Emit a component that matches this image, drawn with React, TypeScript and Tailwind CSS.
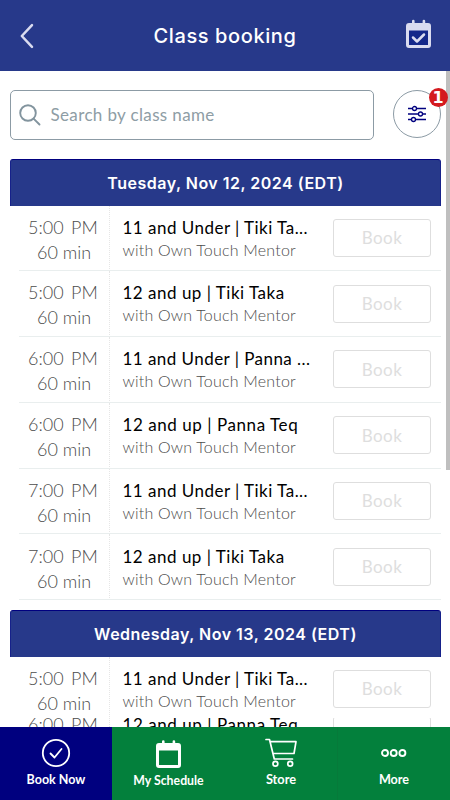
import React from "react";

const lato = "font-['Lato','Noto_Sans',sans-serif]";
const head = "font-['Inter','Liberation_Sans',sans-serif]";

type Slot = { time: string; title: string; tracking: string };

const tuesday: Slot[] = [
  { time: "5:00", title: "11 and Under | Tiki Ta...", tracking: "tracking-[0.48px]" },
  { time: "5:00", title: "12 and up | Tiki Taka", tracking: "tracking-[0.5px]" },
  { time: "6:00", title: "11 and Under | Panna ...", tracking: "tracking-[0.45px]" },
  { time: "6:00", title: "12 and up | Panna Teq", tracking: "tracking-[0.56px]" },
  { time: "7:00", title: "11 and Under | Tiki Ta...", tracking: "tracking-[0.48px]" },
  { time: "7:00", title: "12 and up | Tiki Taka", tracking: "tracking-[0.5px]" },
];

function DayHeader({ children }: { children: React.ReactNode }) {
  return (
    <div className={`${head} flex h-[46.5px] shrink-0 items-center justify-center rounded-t-[3px] border border-b-0 border-x-[#16218a] border-t-[#00007f] bg-[#27398a] text-base font-semibold tracking-[0.5px] text-white`}>
      {children}
    </div>
  );
}

function SlotRow({ slot, divider = true }: { slot: Slot; divider?: boolean }) {
  return (
    <div className="relative flex h-[65.8px] shrink-0 whitespace-nowrap">
      <div className="w-[100px] border-r border-dotted border-[#e6e6e6] text-[18px] font-light text-[#4c4c4c]">
        <div className="mt-[9.2px] flex h-[25px] items-center pl-[18px]">
          <span className="w-[43px]">{slot.time}</span>
          <span>PM</span>
        </div>
        <div className="flex h-[25px] items-center pl-[27px]">60 min</div>
      </div>
      <div className="w-[223px] pl-[12.5px]">
        <div className={`mt-[9.2px] h-[25px] text-[17px] leading-[25px] text-black ${slot.tracking}`}>{slot.title}</div>
        <div className="h-5 text-base leading-5 font-light tracking-[0.21px] text-[#4c4c4c]">with Own Touch Mentor</div>
      </div>
      <div className="mt-[13.4px] flex h-[38px] w-[98px] items-center justify-center rounded-[3px] border border-[#dedede] text-[17px] tracking-[0.4px] text-[#dedede]">Book</div>
      {divider && <div className="absolute right-0 bottom-0 left-[9px] h-px bg-[#e9eeee]" />}
    </div>
  );
}

function TabLabel({ children, className }: { children: string; className: string }) {
  return <div className={`text-center leading-4 font-bold text-white ${className}`}>{children}</div>;
}

export default function App() {
  return (
    <div className={`${lato} flex h-[800px] w-[450px] flex-col overflow-hidden bg-white`}>
      <header className="flex h-[71px] shrink-0 items-center justify-between bg-[#27398a] pr-[18px] pl-5">
        <svg width="14" height="26" viewBox="0 0 14 26" fill="none" stroke="#dadcf0" strokeWidth="2.5" strokeLinecap="round" strokeLinejoin="round">
          <path d="M12 2.2 1.8 13 12 23.8" />
        </svg>
        <h1 className={`${head} ml-[11px] text-xl font-medium tracking-[0.6px] text-white`}>Class booking</h1>
        <svg width="27" height="30" viewBox="0 0 27 30" className="-mt-1">
          <path fill="#14288a" d="M3 11h21v16H3z" />
          <path fillRule="evenodd" fill="#dadcf0" d="M4 4h3V2a1.3 1.3 0 0 1 2.6 0v2h8V2a1.3 1.3 0 0 1 2.6 0v2H23q3 0 3 3v19q0 3-3 3H4q-3 0-3-3V7q0-3 3-3ZM4 11.5v14.5h19V11.5Z" />
          <path d="m8 18.5 4 4 7-7" fill="none" stroke="#dadcf0" strokeWidth="2.5" strokeLinecap="round" strokeLinejoin="round" />
        </svg>
      </header>

      <div className="flex min-h-0 flex-1">
        <main className="flex w-[445.5px] flex-col pr-[4.5px] pl-[10px]">
          <div className="mt-[19px] flex h-[50px] shrink-0 justify-between">
            <div className="flex h-[50px] w-[364px] items-center rounded-[5px] border border-[#8c9ba5] pl-[8px]">
              <svg width="22" height="22" viewBox="0 0 22 22" fill="none" stroke="#82949e" strokeWidth="1.9" strokeLinecap="round">
                <circle cx="9" cy="9" r="7.8" />
                <path d="m14.8 14.8 5.7 5.7" />
              </svg>
              <span className="ml-[9.5px] text-[17px] tracking-[0.36px] text-[#8e9da5]">Search by class name</span>
            </div>
            <div className="relative flex size-12 items-center justify-center rounded-full border border-[#8c9ba5]">
              <svg width="20" height="18" viewBox="0 0 20 18" fill="none" stroke="#00007f" strokeWidth="1.3">
                <path d="M1 3.5h4.5M9.5 3.5H19M1 9h10.5M15.5 9H19M1 14.5h3.5M8.5 14.5H19" />
                <circle cx="7.5" cy="3.5" r="2" />
                <circle cx="13.5" cy="9" r="2" />
                <circle cx="6.5" cy="14.5" r="2" />
              </svg>
              <span className="absolute -top-[3px] left-[34.5px] z-10 flex size-[19px] items-center justify-center rounded-full bg-[#d41a1f] font-['DejaVu_Sans',sans-serif] text-base font-bold text-white">1</span>
            </div>
          </div>

          <section className="mt-[19px] flex shrink-0 flex-col">
            <DayHeader>Tuesday, Nov 12, 2024 (EDT)</DayHeader>
            {tuesday.map((s, i) => <SlotRow key={i} slot={s} />)}
          </section>

          <section className="mt-[10px] flex shrink-0 flex-col">
            <DayHeader>Wednesday, Nov 13, 2024 (EDT)</DayHeader>
            <div className="h-[61px] overflow-hidden">
              <SlotRow slot={tuesday[0]} divider={false} />
            </div>
            <div className="h-[9px] overflow-hidden">
              <div className="-mt-[15px]"><SlotRow slot={tuesday[3]} /></div>
            </div>
          </section>
        </main>
        <div className="h-[399px] w-[4.5px] bg-[#bfbfbf]" />
      </div>

      <nav className="grid h-[73px] shrink-0 grid-cols-[112px_113px_112px_113px]">
        <div className="bg-[#00007f]">
          <svg className="mx-auto mt-[11px]" width="30" height="30" viewBox="0 0 30 30" fill="none" stroke="white" strokeWidth="1.8" strokeLinecap="round" strokeLinejoin="round">
            <circle cx="15" cy="15" r="13.2" />
            <path d="m9.5 15.5 4 4L20.5 11" />
          </svg>
          <TabLabel className="mt-[4px] text-[12.5px]">Book Now</TabLabel>
        </div>
        <div className="bg-[#03803c]">
          <svg className="mx-auto mt-[13px]" width="27" height="29" viewBox="0 0 27 29">
            <path fillRule="evenodd" fill="white" d="M4 3h3V1.5a1.3 1.3 0 0 1 2.6 0V3h8V1.5a1.3 1.3 0 0 1 2.6 0V3H23q3 0 3 3v19q0 3-3 3H4q-3 0-3-3V6q0-3 3-3ZM4 10.5v14.5h19V10.5Z" />
          </svg>
          <TabLabel className="mt-[4px] text-[12.3px]">My Schedule</TabLabel>
        </div>
        <div className="bg-[#03803c]">
          <svg className="mx-auto mt-[11px]" width="32" height="30" viewBox="0 0 32 30" fill="none" stroke="white" strokeWidth="1.7" strokeLinecap="round" strokeLinejoin="round">
            <path d="M1 1.5h3.5l4.8 19.5h18.2M5 3.7h26l-2 11.8H8.2" />
            <circle cx="10.4" cy="25.7" r="2.4" />
            <circle cx="25.2" cy="25.7" r="2.4" />
          </svg>
          <TabLabel className="mt-[3px] text-[12.8px]">Store</TabLabel>
        </div>
        <div className="border-l border-[#067a3a] bg-[#03803c]">
          <svg className="mx-auto mt-[21px]" width="27" height="10" viewBox="0 0 27 10" fill="none" stroke="white" strokeWidth="1.9">
            <circle cx="4" cy="5" r="3" />
            <circle cx="12.7" cy="5" r="3" />
            <circle cx="21.4" cy="5" r="3" />
          </svg>
          <TabLabel className="mt-[14px] text-[12.6px]">More</TabLabel>
        </div>
      </nav>
    </div>
  );
}
